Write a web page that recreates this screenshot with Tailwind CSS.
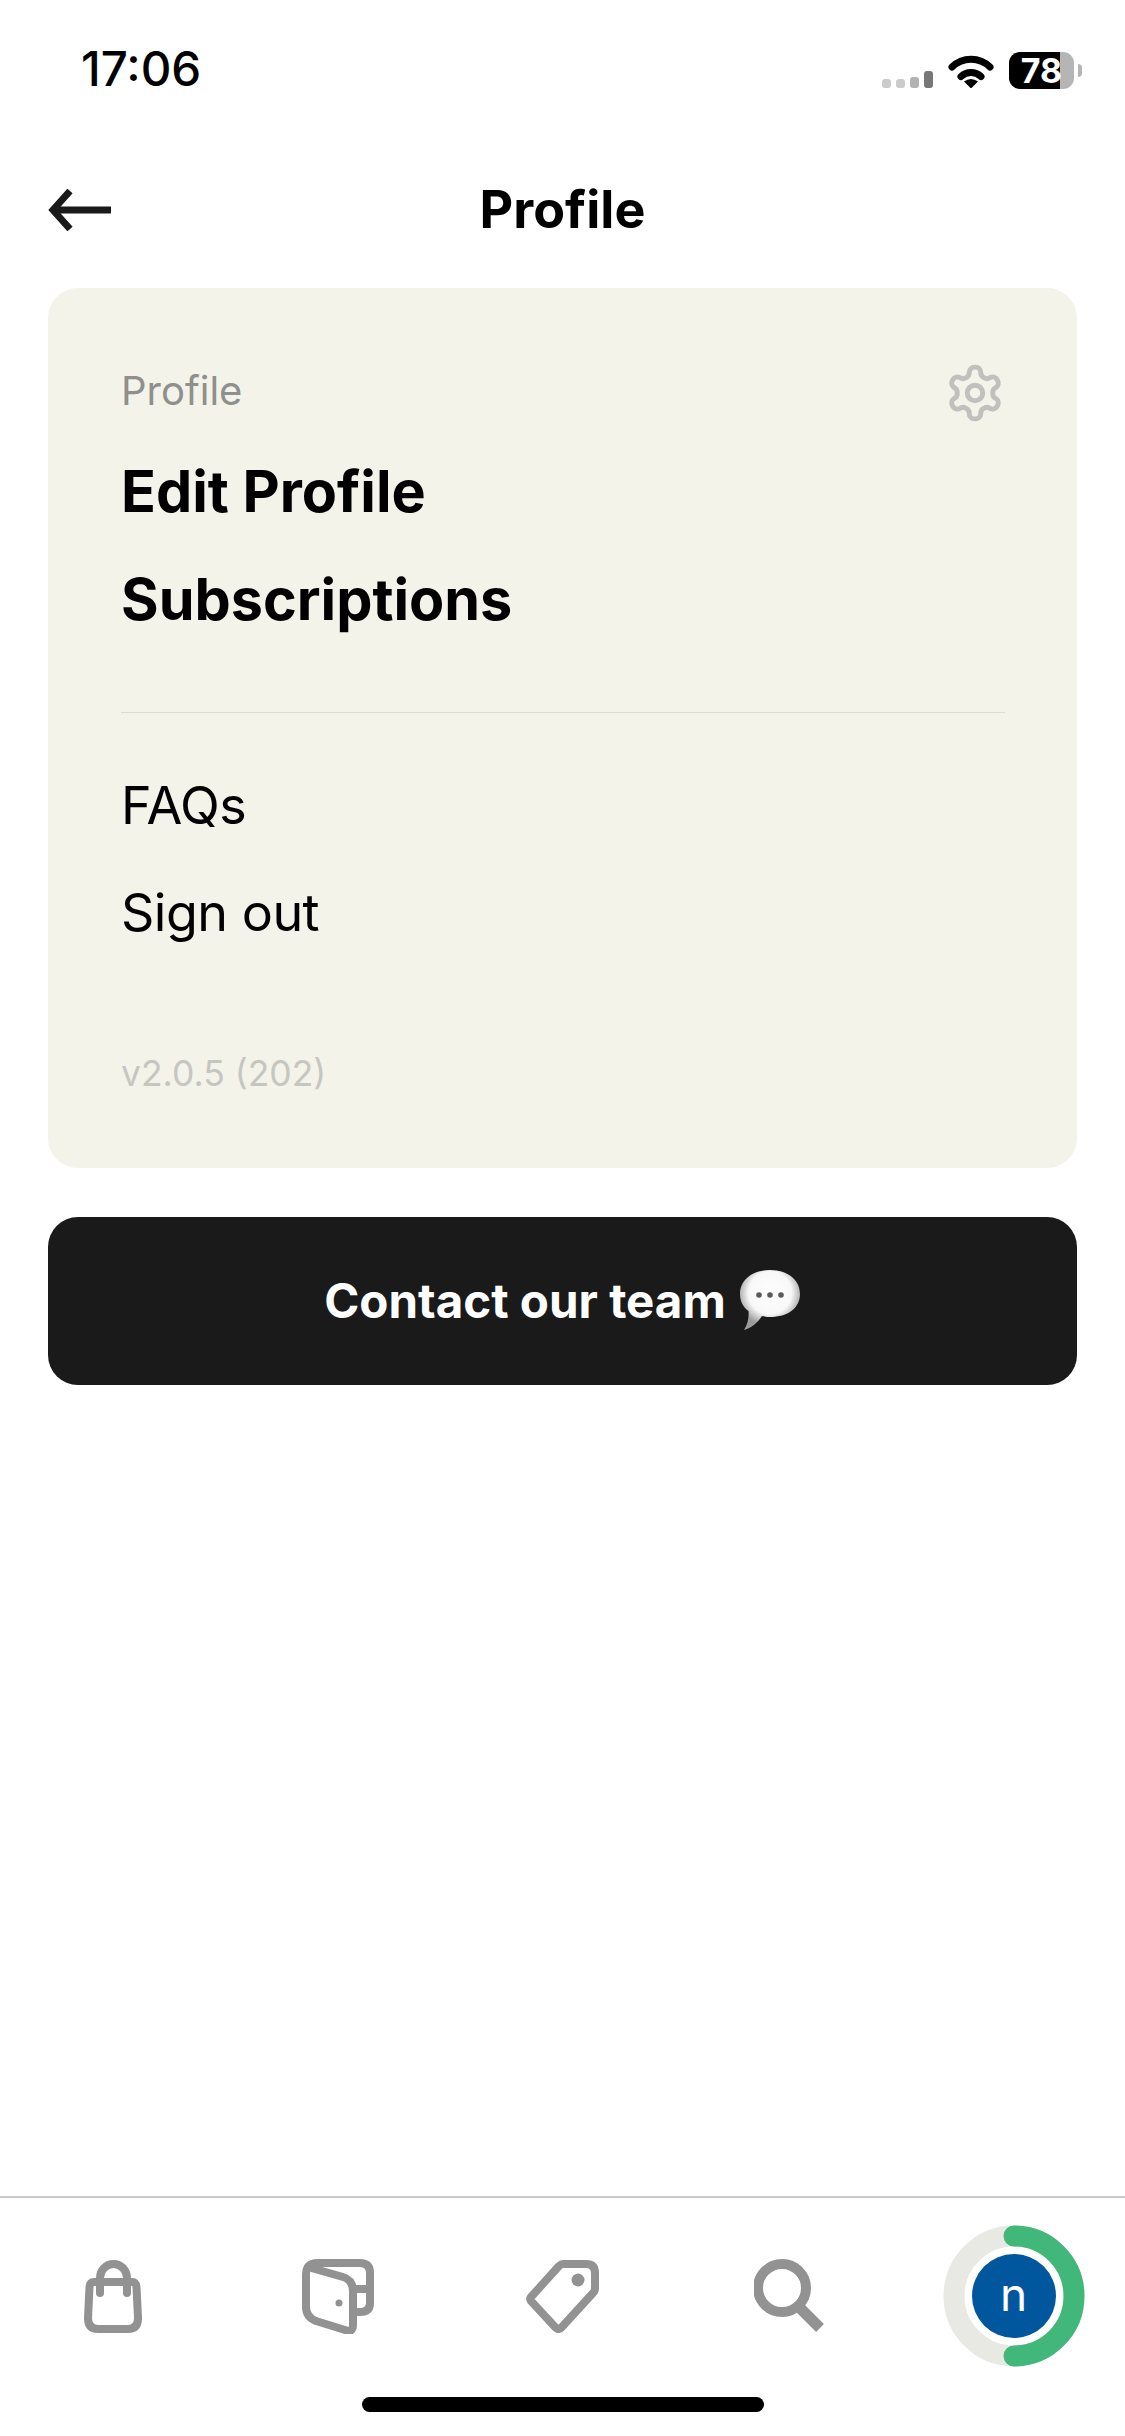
<!DOCTYPE html>
<html lang="en">
<head>
<meta charset="utf-8">
<script src="https://cdn.jsdelivr.net/npm/@tailwindcss/browser@4"></script>
</head>
<body class="bg-white">
<div class="w-[1125px] h-[2436px] flex flex-col bg-white font-['Inter',sans-serif] text-black overflow-hidden">
  <!-- status bar -->
  <div class="h-[132px] shrink-0 flex pt-[45px] pl-[81px] pr-[43px] justify-between items-start">
    <span class="text-[47.500px] leading-[48px] font-medium">17:06</span>
    <div class="flex items-end pt-[7px]">
      <div class="flex items-end gap-[5px] pb-[1px]">
        <div class="w-[9px] h-[9px] rounded-[3px] bg-[#cbcbcb]"></div>
        <div class="w-[9px] h-[9px] rounded-[3px] bg-[#cbcbcb]"></div>
        <div class="w-[9px] h-[11px] rounded-[3px] bg-[#b2b2b2]"></div>
        <div class="w-[9px] h-[17px] rounded-[3px] bg-[#777777]"></div>
      </div>
      <svg class="ml-[15px] mb-[1px]" width="46" height="33" viewBox="0 0 46 33"><path d="M4 12 A27 27 0 0 1 42 12" fill="none" stroke="#000" stroke-width="7" stroke-linecap="round"/><path d="M13 21.500 A14.500 14.500 0 0 1 33 21.500" fill="none" stroke="#000" stroke-width="7" stroke-linecap="round"/><path d="M16 26.500 Q23 21.500 30 26.500 L24 32.500 Q23 33.500 22 32.500 Z" fill="#000"/></svg>
      <div class="relative ml-[15px] w-[65px] h-[37px] flex">
        <div class="w-[51px] h-full bg-black rounded-l-[11px]"></div>
        <div class="w-[14px] h-full bg-[#b5b5b5] rounded-r-[11px]"></div>
        <span class="absolute inset-0 flex items-center justify-center text-white font-bold text-[34px] leading-none">78</span>
      </div>
      <div class="ml-[4px] mb-[12px] w-[4px] h-[13px] rounded-r-full bg-[#b5b5b5]"></div>
    </div>
  </div>
  <!-- header -->
  <div class="h-[156px] shrink-0 relative flex items-center justify-center">
    <svg class="absolute left-[48px] top-[57px]" width="64" height="42" viewBox="0 0 64 42"><path d="M63 21 H6" stroke="#1a1a1a" stroke-width="7"/><path d="M22 2 L5 21 L22 40" fill="none" stroke="#1a1a1a" stroke-width="7"/></svg>
    <h1 class="text-[52px] leading-[60px] font-bold">Profile</h1>
  </div>
  <!-- card -->
  <div class="mx-[48px] rounded-[30px] bg-[#f3f3ea] pt-[73px] pb-[64px] pl-[73px] pr-[72px] relative">
    <svg class="absolute right-[71px] top-[74px]" width="62" height="62" viewBox="0 0 24 24" fill="none" stroke="#c0c0bc" stroke-width="1.9" stroke-linecap="round" stroke-linejoin="round"><path d="M12.22 2h-.44a2 2 0 0 0-2 2v.18a2 2 0 0 1-1 1.73l-.43.25a2 2 0 0 1-2 0l-.15-.08a2 2 0 0 0-2.73.73l-.22.38a2 2 0 0 0 .73 2.73l.15.1a2 2 0 0 1 1 1.72v.51a2 2 0 0 1-1 1.74l-.15.09a2 2 0 0 0-.73 2.73l.22.38a2 2 0 0 0 2.73.73l.15-.08a2 2 0 0 1 2 0l.43.25a2 2 0 0 1 1 1.73V20a2 2 0 0 0 2 2h.44a2 2 0 0 0 2-2v-.18a2 2 0 0 1 1-1.73l.43-.25a2 2 0 0 1 2 0l.15.08a2 2 0 0 0 2.73-.73l.22-.39a2 2 0 0 0-.73-2.73l-.15-.08a2 2 0 0 1-1-1.74v-.5a2 2 0 0 1 1-1.74l.15-.09a2 2 0 0 0 .73-2.73l-.22-.38a2 2 0 0 0-2.73-.73l-.15.08a2 2 0 0 1-2 0l-.43-.25a2 2 0 0 1-1-1.73V4a2 2 0 0 0-2-2z"/><circle cx="12" cy="12" r="3"/></svg>
    <div class="text-[40px] leading-[60px] text-[#8f8f8c]">Profile</div>
    <div class="mt-[16px] text-[57.500px] leading-[108px] font-bold">Edit Profile</div>
    <div class="text-[57.500px] leading-[108px] font-bold">Subscriptions</div>
    <div class="mt-[59px] h-px bg-[#dcdcd5]"></div>
    <div class="mt-[39px] text-[52px] leading-[107px] tracking-[-0.5px]">FAQs</div>
    <div class="text-[52px] leading-[107px] tracking-[-0.5px]">Sign out</div>
    <div class="mt-[78px] text-[35.500px] leading-[60px] text-[#c6c6c1]">v2.0.5 (202)</div>
  </div>
  <!-- button -->
  <div class="mx-[48px] mt-[49px] h-[168px] rounded-[30px] bg-[#1a1a1a] flex items-center justify-center gap-[13px]">
    <span class="text-white text-[47.500px] leading-[60px] font-bold">Contact our team</span>
    <svg width="62" height="60" viewBox="0 0 62 60" class="mb-[2px]">
      <defs><radialGradient id="bub" cx="50%" cy="38%" r="55%"><stop offset="0%" stop-color="#ffffff"/><stop offset="65%" stop-color="#f8f8f8"/><stop offset="100%" stop-color="#9c9c9c"/></radialGradient></defs>
      <path d="M31 0 C49 0 61 10 61 24 C61 38 49 47 31 47 C28 47 25 46.500 23 46 C19 52 13 58 5 60 C9 54 10 47 9.500 41 C4 37 1 31 1 24 C1 10 13 0 31 0 Z" fill="url(#bub)"/>
      <circle cx="20" cy="25" r="2.800" fill="#5a5a5a"/><circle cx="31" cy="25" r="2.800" fill="#5a5a5a"/><circle cx="42" cy="25" r="2.800" fill="#5a5a5a"/>
    </svg>
  </div>
  <div class="flex-1"></div>
  <!-- tab bar -->
  <div class="shrink-0 border-t-[2px] border-[#c9c9c9] grid grid-cols-5 h-[201px] pb-[3px]">
    <div class="flex items-center justify-center">
      <svg width="58" height="73" viewBox="0 0 58 73" fill="none" stroke="#929292" stroke-width="8" stroke-linecap="round" stroke-linejoin="round"><path d="M10 22 H48 Q52 22 52.500 27 L54 58 Q54 69 44 69 H14 Q4 69 4 58 L5.500 27 Q6 22 10 22Z"/><path d="M16 33 V18 A13.500 14 0 0 1 43 18 V33"/></svg>
    </div>
    <div class="flex items-center justify-center">
      <svg width="72" height="75" viewBox="0 0 72 75" fill="none" stroke="#929292" stroke-width="8" stroke-linecap="round" stroke-linejoin="round"><path d="M4 48 V16 Q4 4 16 4 H58 Q68 4 68 14 V44 Q68 53 58 53 H52"/><path d="M6 8 L41 18 Q51 21 51 32 V66 Q51 74 43 71 L14 62 Q4 58 4 48"/><path d="M52 30 H68"/><circle cx="37" cy="44" r="3.500" fill="#929292" stroke="none"/></svg>
    </div>
    <div class="flex items-center justify-center">
      <svg width="73" height="73" viewBox="0 0 73 73" fill="none" stroke="#929292" stroke-width="8" stroke-linecap="round" stroke-linejoin="round"><path d="M37 4 H60 Q69 4 69 13 V28 Q69 31 67 33 L35 68 Q32.500 70 30 68 L5 41 Q3.500 39 5 37 L33 6 Q35 4 37 4Z"/><circle cx="52" cy="20" r="6.500" fill="#929292" stroke="none"/></svg>
    </div>
    <div class="flex items-center justify-center pl-[3px] pb-[2px]">
      <svg width="71" height="73" viewBox="0 0 71 73" fill="none" stroke="#929292"><circle cx="28" cy="29" r="24" stroke-width="10"/><path d="M46 49 L66 69" stroke-width="11"/></svg>
    </div>
    <div class="flex items-center justify-center pl-[2px]">
      <div class="relative w-[142px] h-[142px]">
        <svg class="absolute inset-0" width="142" height="142" viewBox="0 0 142 142" fill="none"><circle cx="71" cy="71" r="60" stroke="#e8e9e3" stroke-width="21"/><path d="M71 11 A60 60 0 0 1 71 131" stroke="#42b77a" stroke-width="21" stroke-linecap="round"/></svg>
        <div class="absolute left-[29px] top-[29px] w-[84px] h-[84px] rounded-full bg-[#00579e] text-white flex items-center justify-center text-[46px] leading-none pb-[5px]">n</div>
      </div>
    </div>
  </div>
  <div class="shrink-0 h-[39px] flex justify-center">
    <div class="w-[402px] h-[15px] rounded-full bg-black"></div>
  </div>
</div>
</body>
</html>
